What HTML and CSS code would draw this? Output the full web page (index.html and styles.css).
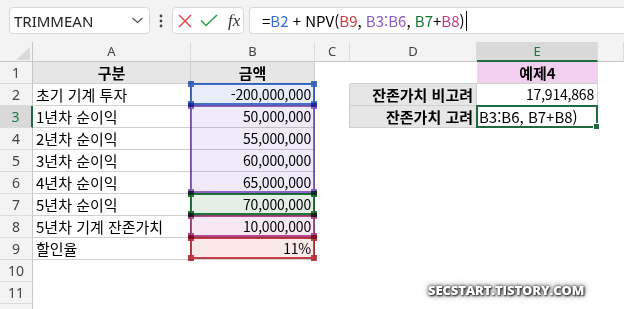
FILE: index.html
```html
<!DOCTYPE html>
<html lang="ko">
<head>
<meta charset="utf-8">
<link rel="stylesheet" href="styles.css">
</head>
<body>
<div class="toolbar">
  <div class="namebox"><span>TRIMMEAN</span>
    <svg width="11" height="7" viewBox="0 0 11 7"><polyline points="0.5,1 5.5,5.5 10.5,1" fill="none" stroke="#555" stroke-width="1.2"/></svg>
  </div>
  <div class="dots"><svg width="4" height="14" viewBox="0 0 4 14"><circle cx="2" cy="2" r="1.4" fill="#444"/><circle cx="2" cy="7" r="1.4" fill="#444"/><circle cx="2" cy="12" r="1.4" fill="#444"/></svg></div>
  <div class="fxbox">
    <svg class="ic-x" width="14" height="14" viewBox="0 0 14 14"><path d="M1 1 L13 13 M13 1 L1 13" stroke="#e2474c" stroke-width="1.5" fill="none"/></svg>
    <svg class="ic-ok" width="18" height="13" viewBox="0 0 18 13"><polyline points="1,6.5 6,11.5 17,1" fill="none" stroke="#2f9e4f" stroke-width="1.6"/></svg>
    <span class="fx">fx</span>
  </div>
  <div class="formula"><span>=</span><span class="r-blue">B2</span><span> + NPV(</span><span class="r-red">B9</span><span>, </span><span class="r-purple">B3:B6</span><span>, </span><span class="r-green">B7</span><span>+</span><span class="r-mag">B8</span><span>)</span><span class="caret"></span></div>
</div>

<div class="sheetwrap">
  <div class="sheet">
    <div class="corner"><div class="tri"></div></div><div class="ch">A</div><div class="ch">B</div><div class="ch">C</div><div class="ch">D</div><div class="ch active">E</div><div class="ch"></div>

    <div class="rh">1</div><div class="c t hdr">구분</div><div class="c t hdr">금액</div><div class="c"></div><div class="c bb"></div><div class="c pink">예제4</div><div class="c"></div>

    <div class="rh">2</div><div class="c t">초기 기계 투자</div><div class="c t num">-200,000,000</div><div class="c br"></div><div class="c t lbl">잔존가치 비고려</div><div class="c t num">17,914,868</div><div class="c"></div>

    <div class="rh active">3</div><div class="c t">1년차 순이익</div><div class="c t num">50,000,000</div><div class="c br"></div><div class="c t lbl">잔존가치 고려</div><div class="c t edit">B3:B6, B7+B8)</div><div class="c"></div>

    <div class="rh">4</div><div class="c t">2년차 순이익</div><div class="c t num">55,000,000</div><div class="c"></div><div class="c"></div><div class="c"></div><div class="c"></div>

    <div class="rh">5</div><div class="c t">3년차 순이익</div><div class="c t num">60,000,000</div><div class="c"></div><div class="c"></div><div class="c"></div><div class="c"></div>

    <div class="rh">6</div><div class="c t">4년차 순이익</div><div class="c t num">65,000,000</div><div class="c"></div><div class="c"></div><div class="c"></div><div class="c"></div>

    <div class="rh">7</div><div class="c t">5년차 순이익</div><div class="c t num">70,000,000</div><div class="c"></div><div class="c"></div><div class="c"></div><div class="c"></div>

    <div class="rh">8</div><div class="c t">5년차 기계 잔존가치</div><div class="c t num">10,000,000</div><div class="c"></div><div class="c"></div><div class="c"></div><div class="c"></div>

    <div class="rh">9</div><div class="c t">할인율</div><div class="c t num">11%</div><div class="c"></div><div class="c"></div><div class="c"></div><div class="c"></div>

    <div class="rh">10</div><div class="c"></div><div class="c"></div><div class="c"></div><div class="c"></div><div class="c"></div><div class="c"></div>

    <div class="rh">11</div><div class="c"></div><div class="c"></div><div class="c"></div><div class="c"></div><div class="c"></div><div class="c"></div>

    <div class="rh"></div><div class="c"></div><div class="c"></div><div class="c"></div><div class="c"></div><div class="c"></div><div class="c"></div>
  </div>

  <div class="overlay">
    <div class="rng g-b2"><span class="h tl"></span><span class="h tr"></span><span class="h bl"></span><span class="h br2"></span></div>
    <div class="rng g-b36"><span class="h tl"></span><span class="h tr"></span><span class="h bl"></span><span class="h br2"></span></div>
    <div class="rng g-b7"><span class="h tl"></span><span class="h tr"></span><span class="h bl"></span><span class="h br2"></span></div>
    <div class="rng g-b8"><span class="h tl"></span><span class="h tr"></span><span class="h bl"></span><span class="h br2"></span></div>
    <div class="rng g-b9"><span class="h tl"></span><span class="h tr"></span><span class="h bl"></span><span class="h br2"></span></div>
    <div class="sel g-e3"><span class="fill"></span></div>
  </div>
</div>

<div class="watermark">SECSTART.TISTORY.COM</div>
</body>
</html>
```

FILE: styles.css
```css
* { box-sizing: border-box; margin: 0; padding: 0; }

body {
  width: 624px;
  height: 309px;
  overflow: hidden;
  background: #fff;
  position: relative;
  font-family: "Noto Sans CJK KR", "Noto Sans", sans-serif;
  color: #000;
}

/* ---------- toolbar ---------- */
.toolbar {
  height: 42px;
  background: #f3f3f3;
  display: flex;
  align-items: flex-start;
  padding: 7px 0 0 9px;
}

.namebox {
  width: 141px;
  height: 27px;
  background: #fff;
  border: 1px solid #d9d9d9;
  border-radius: 4px;
  display: flex;
  align-items: center;
  justify-content: space-between;
  padding: 0 6px 0 4px;
  font-family: "Noto Sans", sans-serif;
  font-size: 15px;
  color: #222;
}

.dots {
  width: 22px;
  height: 27px;
  display: flex;
  align-items: center;
  justify-content: center;
}

.fxbox {
  width: 72px;
  height: 27px;
  background: #fff;
  border: 1px solid #d9d9d9;
  border-radius: 4px;
  display: flex;
  align-items: center;
  padding-left: 5px;
}

.ic-ok { margin-left: 8px; }

.fx {
  margin-left: 10px;
  font-family: "Liberation Serif", "DejaVu Serif", serif;
  font-style: italic;
  font-size: 17px;
  color: #333;
  line-height: 1;
}

.formula {
  flex: 1;
  margin-left: 5px;
  height: 27px;
  background: #fff;
  border: 1px solid #d9d9d9;
  border-right: none;
  border-radius: 4px 0 0 4px;
  padding-left: 12px;
  display: flex;
  align-items: center;
  font-size: 15px;
  white-space: pre;
  color: #000;
}

.r-blue { color: #3a6fd2; }
.r-red { color: #d0393e; }
.r-purple { color: #8a5bc7; }
.r-green { color: #12782f; }
.r-mag { color: #c1388c; }

.caret {
  width: 1px;
  height: 20px;
  background: #000;
  margin-left: 1px;
}

/* ---------- sheet ---------- */
.sheetwrap { position: relative; }

.sheet,
.overlay {
  display: grid;
  grid-template-columns: 33px 158px 124px 35px 127px 121px 26px;
  grid-template-rows: 20px repeat(12, 22px);
}

.overlay {
  position: absolute;
  inset: 0;
  pointer-events: none;
}

.corner {
  background: #f3f3f3;
  border-right: 1px solid #c6c6c6;
  border-bottom: 1px solid #c6c6c6;
  padding: 5px 0 0 16px;
}

.tri {
  width: 14px;
  height: 13px;
  background: #dadada;
  clip-path: polygon(100% 0, 100% 100%, 0 100%);
}

.ch {
  background: #f3f3f3;
  border-right: 1px solid #dcdcdc;
  border-bottom: 1px solid #c6c6c6;
  text-align: center;
  font-family: "Noto Sans", sans-serif;
  font-size: 13px;
  line-height: 19px;
  color: #444;
}

.ch.active {
  background: #d9d9d9;
  color: #107c41;
  border-bottom: 2px solid #1d6b3f;
}

.rh {
  background: #f3f3f3;
  border-right: 1px solid #c6c6c6;
  border-bottom: 1px solid #dcdcdc;
  text-align: center;
  font-family: "Noto Sans", sans-serif;
  font-size: 14px;
  line-height: 21px;
  color: #444;
}

.rh.active {
  background: #d9d9d9;
  color: #107c41;
  border-right: 2px solid #1d6b3f;
}

.c {
  font-size: 15px;
  line-height: 21px;
  padding: 0 3px;
  white-space: nowrap;
  overflow: hidden;
}

.t {
  border-right: 1px solid #d0d0d0;
  border-bottom: 1px solid #d0d0d0;
}

.bb { border-bottom: 1px solid #d0d0d0; }
.br { border-right: 1px solid #d0d0d0; }

.hdr {
  background: #e7e6e6;
  font-weight: bold;
  text-align: center;
}

.lbl {
  background: #e7e6e6;
  font-weight: bold;
  text-align: right;
}

.pink {
  background: #f2cfee;
  font-weight: bold;
  text-align: center;
  border-bottom: 1px solid #d0d0d0;
}

.num {
  text-align: right;
  font-size: 14px;
  letter-spacing: -0.2px;
  padding-right: 3px;
}

.edit {
  font-size: 15px;
  padding-left: 2px;
}

/* ---------- range highlights ---------- */
.rng {
  position: relative;
  border: 2px solid;
  margin: -1px 0 1px -1px;
  mix-blend-mode: multiply;
}

.g-b2 { grid-column: 3; grid-row: 3; border-color: #4170cc; background: #e8eef9; }
.g-b36 { grid-column: 3; grid-row: 4 / 8; border-color: #8d61c8; background: #efebf8; }
.g-b7 { grid-column: 3; grid-row: 8; border-color: #1a7a35; background: #e4f0e6; }
.g-b8 { grid-column: 3; grid-row: 9; border-color: #b4478d; background: #f7e9f3; }
.g-b9 { grid-column: 3; grid-row: 10; border-color: #c23e47; background: #fbe9ea; }

.h {
  position: absolute;
  width: 6px;
  height: 6px;
}

.g-b2 .h { background: #4170cc; }
.g-b36 .h { background: #8d61c8; }
.g-b7 .h { background: #1a7a35; }
.g-b8 .h { background: #b4478d; }
.g-b9 .h { background: #c23e47; }

.tl { left: -4px; top: -4px; }
.tr { right: -4px; top: -4px; }
.bl { left: -4px; bottom: -4px; }
.br2 { right: -4px; bottom: -4px; }

.sel {
  grid-column: 6;
  grid-row: 4;
  position: relative;
  border: 2px solid #1d6b3f;
  margin: -1px 0 0 -1px;
}

.fill {
  position: absolute;
  right: -4px;
  bottom: -4px;
  width: 5px;
  height: 5px;
  background: #1d6b3f;
  border: 1px solid #fff;
  box-sizing: content-box;
}

/* ---------- watermark ---------- */
.watermark {
  position: absolute;
  left: 428px;
  top: 281px;
  font-family: "Open Sans", sans-serif;
  font-weight: 800;
  font-size: 13px;
  color: #fff;
  letter-spacing: -0.1px;
  text-shadow: 0 0 3px #222, 1px 1px 2px #333, 0 0 6px #555;
}
```
